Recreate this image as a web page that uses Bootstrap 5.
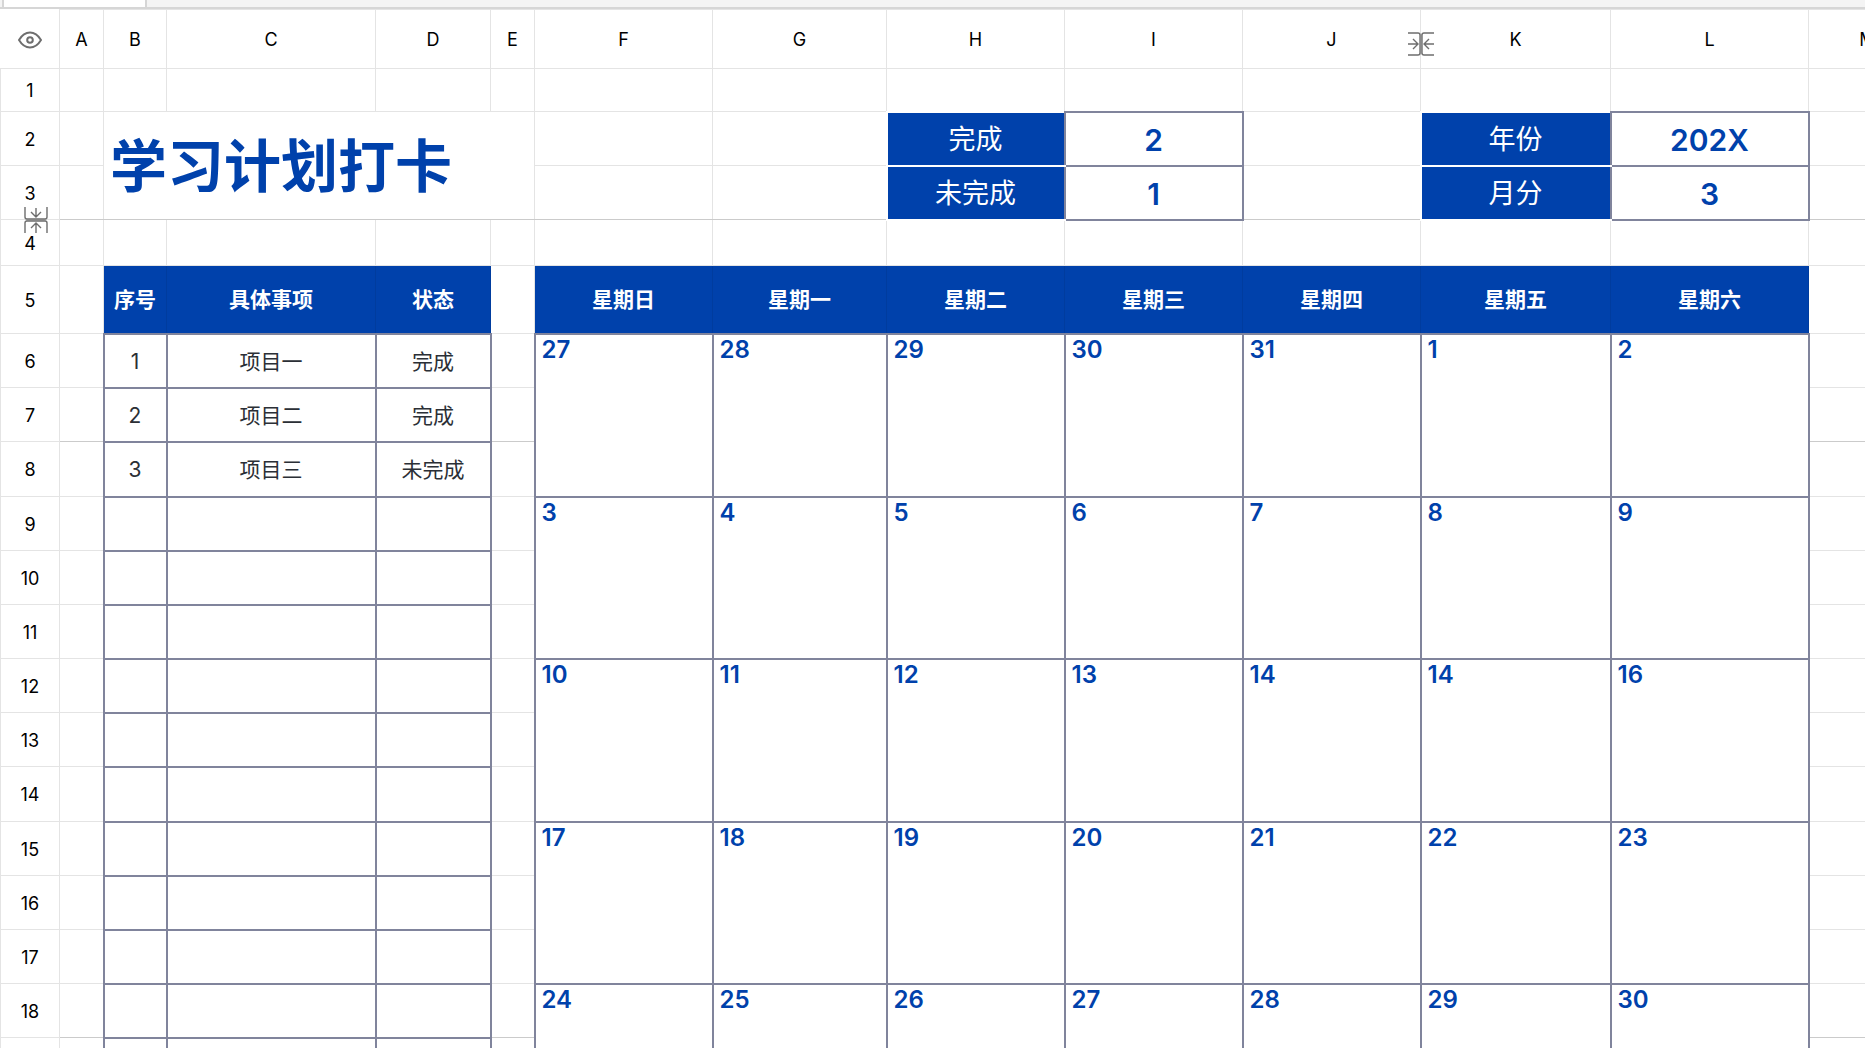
<!DOCTYPE html>
<html lang="zh-CN">
<head>
<meta charset="utf-8">
<meta name="viewport" content="width=device-width, initial-scale=1">
<title>学习计划打卡</title>
<link href="https://cdn.jsdelivr.net/npm/bootstrap@5.3.0/dist/css/bootstrap.min.css" rel="stylesheet">
<style>
:root { --ink: #0041ab; --rule: #80849c; --grid: #e4e4e4; --grid-strong: #cbcbcb; }
body { font-family: Inter, "Noto Sans CJK SC", sans-serif; background: #fff; color: #2b2f36; height: 100vh; overflow: hidden; }
.tabstrip { height: 9px; background: #f4f4f4; border-bottom: 2px solid #d6d6d6; }
.sheet-tab { width: 145px; margin-left: 2px; background: #fff; border: solid #d6d6d6; border-width: 0 2px; }
.sheet { width: calc(100% + 62px); table-layout: fixed; border-collapse: collapse; font-size: 21px; line-height: 30px; }
.sheet th, .sheet td { border: 1px solid var(--grid); padding: 2px 0 0; text-align: center; vertical-align: middle; font-weight: 400; }
.edge td { border-bottom-color: var(--grid-strong); }
.w-head { width: 59px; } .w-a, .w-e { width: 44px; } .w-b { width: 63px; } .w-c { width: 209px; } .w-d { width: 115px; }
.w-day { width: 178px; } .w-g { width: 174px; } .w-k { width: 190px; } .w-l { width: 198px; }
.h-cols { height: 59px; } .h-1 { height: 43px; } .h-4 { height: 46px; } .h-5 { height: 68px; } .h-row { height: 54px; } .h-tall { height: 55px; }
.sheet .label { font-size: 18px; color: #000; }
.sheet .corner { border-left-color: transparent; border-top-color: transparent; }
.sheet .title { color: var(--ink); font-size: 57px; line-height: 72px; font-weight: 700; text-align: left; padding-left: 6px; border-bottom-color: var(--grid-strong); }
.sheet .tag { background: var(--ink); color: #fff; font-size: 27px; border: 2px solid #fff; border-right-color: var(--rule); }
.sheet .figure-cell { color: var(--ink); font-size: 30px; font-weight: 600; border: 2px solid var(--rule); }
.sheet .head { background: var(--ink); color: #fff; font-weight: 700; border-color: #003c9e; border-bottom: 2px solid var(--rule); }
.sheet .item { border: 2px solid var(--rule); }
.sheet .day { border: 2px solid var(--rule); color: var(--ink); font-size: 24px; font-weight: 600; text-align: left; vertical-align: top; padding: 0 0 0 6px; }
.pin-x { right: -14px; top: 22px; z-index: 1; }
.pin-y { left: 23px; bottom: -14px; z-index: 1; }
svg { display: block; fill: none; stroke: #6e6e6e; }
</style>
</head>
<body>
<div class="tabstrip d-flex"><div class="sheet-tab"></div></div>
<table class="sheet">
<colgroup><col class="w-head"><col class="w-a"><col class="w-b"><col class="w-c"><col class="w-d"><col class="w-e"><col class="w-day"><col class="w-g"><col class="w-day"><col class="w-day"><col class="w-day"><col class="w-k"><col class="w-l"><col></colgroup>
<thead>
<tr class="h-cols">
<th class="label corner"><svg class="mx-auto" width="24" height="18" viewBox="0 0 24 18" stroke-width="2" role="img" aria-label="显示"><path d="M1 9C4 4 7.500 1.500 12 1.500S20 4 23 9C20 14 16.500 16.500 12 16.500S4 14 1 9Z"/><circle cx="12" cy="9" r="2.800"/></svg></th>
<th class="label">A</th><th class="label">B</th><th class="label">C</th><th class="label">D</th><th class="label">E</th><th class="label">F</th><th class="label">G</th><th class="label">H</th><th class="label">I</th>
<th class="label position-relative">J<svg class="pin-x position-absolute" width="26" height="24" viewBox="0 0 26 24" stroke-width="1.400"><path d="M13 2V22" stroke="#ccc" stroke-width="2"/><path d="M0 1H10Q12 1 12 3V21Q12 23 10 23H0M26 1H16Q14 1 14 3V21Q14 23 16 23H26M0 12H10M5 7L10 12L5 17M26 12H16M21 7L16 12L21 17"/></svg></th>
<th class="label">K</th><th class="label">L</th><th class="label">M</th>
</tr>
</thead>
<tbody>
<tr class="h-1"><th class="label">1</th><td></td><td></td><td></td><td></td><td></td><td></td><td></td><td></td><td></td><td></td><td></td><td></td><td></td></tr>
<tr class="h-row"><th class="label">2</th><td></td><td class="title" colspan="4" rowspan="2">学习计划打卡</td><td></td><td></td><td class="tag">完成</td><td class="figure-cell">2</td><td></td><td class="tag">年份</td><td class="figure-cell">202X</td><td></td></tr>
<tr class="h-row edge"><th class="label position-relative">3<svg class="pin-y position-absolute" width="24" height="26" viewBox="0 0 24 26" stroke-width="1.400"><path d="M2 13H22" stroke="#ccc" stroke-width="2"/><path d="M1 0V10Q1 12 3 12H21Q23 12 23 10V0M1 26V16Q1 14 3 14H21Q23 14 23 16V26M12 1V10M7 5L12 10L17 5M12 26V16M7 21L12 16L17 21"/></svg></th><td></td><td></td><td></td><td class="tag">未完成</td><td class="figure-cell">1</td><td></td><td class="tag">月分</td><td class="figure-cell">3</td><td></td></tr>
<tr class="h-4"><th class="label">4</th><td></td><td></td><td></td><td></td><td></td><td></td><td></td><td></td><td></td><td></td><td></td><td></td><td></td></tr>
<tr class="h-5"><th class="label">5</th><td></td><th class="head">序号</th><th class="head">具体事项</th><th class="head">状态</th><td></td><th class="head">星期日</th><th class="head">星期一</th><th class="head">星期二</th><th class="head">星期三</th><th class="head">星期四</th><th class="head">星期五</th><th class="head">星期六</th><td></td></tr>
<tr class="h-row"><th class="label">6</th><td></td><td class="item">1</td><td class="item">项目一</td><td class="item">完成</td><td></td><td class="day" rowspan="3">27</td><td class="day" rowspan="3">28</td><td class="day" rowspan="3">29</td><td class="day" rowspan="3">30</td><td class="day" rowspan="3">31</td><td class="day" rowspan="3">1</td><td class="day" rowspan="3">2</td><td></td></tr>
<tr class="h-row edge"><th class="label">7</th><td></td><td class="item">2</td><td class="item">项目二</td><td class="item">完成</td><td></td><td></td></tr>
<tr class="h-tall"><th class="label">8</th><td></td><td class="item">3</td><td class="item">项目三</td><td class="item">未完成</td><td></td><td></td></tr>
<tr class="h-row"><th class="label">9</th><td></td><td class="item"></td><td class="item"></td><td class="item"></td><td></td><td class="day" rowspan="3">3</td><td class="day" rowspan="3">4</td><td class="day" rowspan="3">5</td><td class="day" rowspan="3">6</td><td class="day" rowspan="3">7</td><td class="day" rowspan="3">8</td><td class="day" rowspan="3">9</td><td></td></tr>
<tr class="h-row"><th class="label">10</th><td></td><td class="item"></td><td class="item"></td><td class="item"></td><td></td><td></td></tr>
<tr class="h-row"><th class="label">11</th><td></td><td class="item"></td><td class="item"></td><td class="item"></td><td></td><td></td></tr>
<tr class="h-row"><th class="label">12</th><td></td><td class="item"></td><td class="item"></td><td class="item"></td><td></td><td class="day" rowspan="3">10</td><td class="day" rowspan="3">11</td><td class="day" rowspan="3">12</td><td class="day" rowspan="3">13</td><td class="day" rowspan="3">14</td><td class="day" rowspan="3">14</td><td class="day" rowspan="3">16</td><td></td></tr>
<tr class="h-row"><th class="label">13</th><td></td><td class="item"></td><td class="item"></td><td class="item"></td><td></td><td></td></tr>
<tr class="h-tall"><th class="label">14</th><td></td><td class="item"></td><td class="item"></td><td class="item"></td><td></td><td></td></tr>
<tr class="h-row"><th class="label">15</th><td></td><td class="item"></td><td class="item"></td><td class="item"></td><td></td><td class="day" rowspan="3">17</td><td class="day" rowspan="3">18</td><td class="day" rowspan="3">19</td><td class="day" rowspan="3">20</td><td class="day" rowspan="3">21</td><td class="day" rowspan="3">22</td><td class="day" rowspan="3">23</td><td></td></tr>
<tr class="h-row"><th class="label">16</th><td></td><td class="item"></td><td class="item"></td><td class="item"></td><td></td><td></td></tr>
<tr class="h-row"><th class="label">17</th><td></td><td class="item"></td><td class="item"></td><td class="item"></td><td></td><td></td></tr>
<tr class="h-row edge"><th class="label">18</th><td></td><td class="item"></td><td class="item"></td><td class="item"></td><td></td><td class="day" rowspan="2">24</td><td class="day" rowspan="2">25</td><td class="day" rowspan="2">26</td><td class="day" rowspan="2">27</td><td class="day" rowspan="2">28</td><td class="day" rowspan="2">29</td><td class="day" rowspan="2">30</td><td></td></tr>
<tr class="h-row"><th></th><td></td><td class="item"></td><td class="item"></td><td class="item"></td><td></td><td></td></tr>
</tbody>
</table>
<script src="https://cdn.jsdelivr.net/npm/bootstrap@5.3.0/dist/js/bootstrap.bundle.min.js"></script>
</body>
</html>
